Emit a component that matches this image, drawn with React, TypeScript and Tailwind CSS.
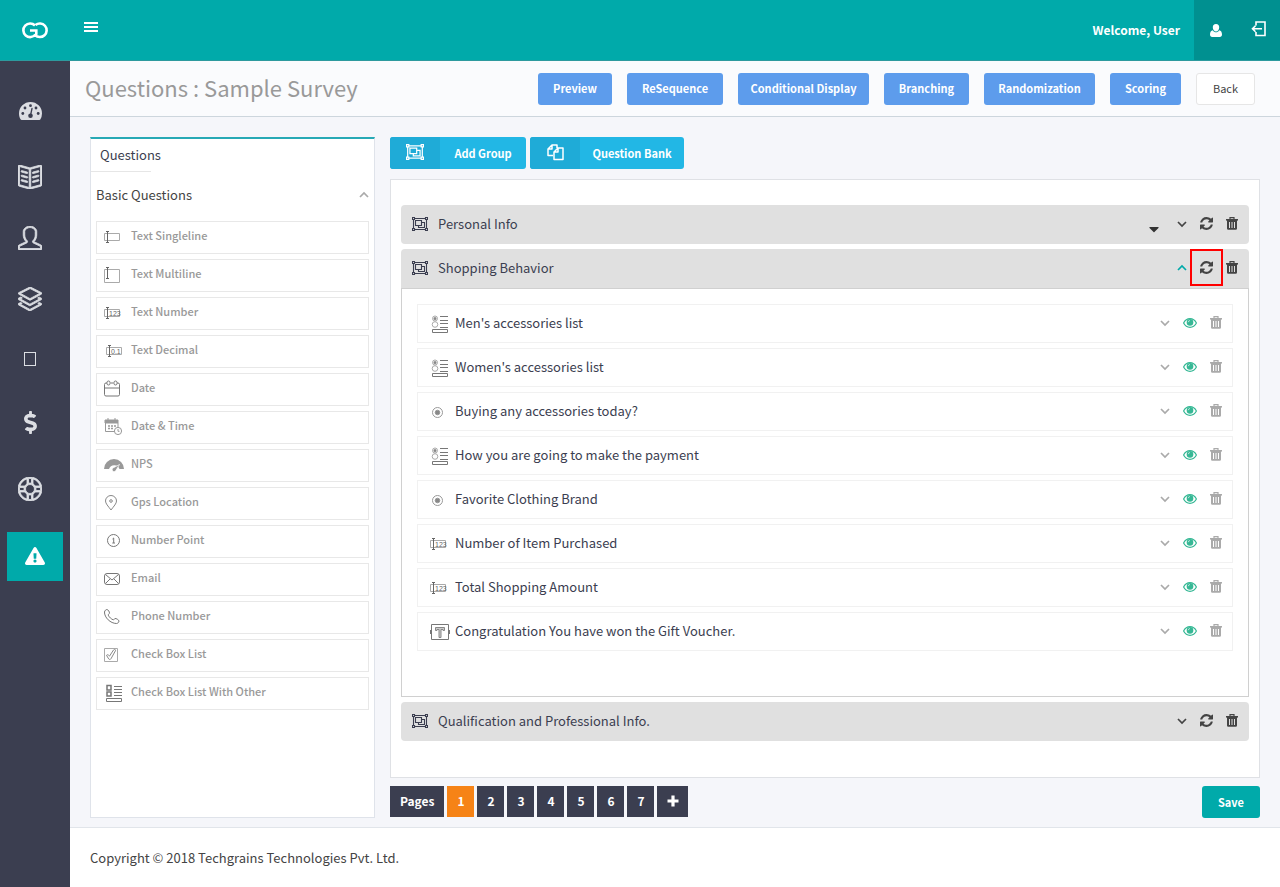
import { ReactNode } from "react";
import clsx from "clsx";
import { FaCaretDown, FaDollarSign, FaExclamationTriangle } from "react-icons/fa";
import { SlBookOpen, SlLayers, SlSupport, SlUser } from "react-icons/sl";

type IconName = "single" | "multi" | "number" | "decimal" | "date" | "datetime" | "nps" | "gps" | "point" | "email" | "phone" | "check" | "checkOther" | "radioOther" | "radio" | "text"

const basicQuestions: { label: string, icon: IconName }[] = [
    { label: "Text Singleline", icon: "single" },
    { label: "Text Multiline", icon: "multi" },
    { label: "Text Number", icon: "number" },
    { label: "Text Decimal", icon: "decimal" },
    { label: "Date", icon: "date" },
    { label: "Date & Time", icon: "datetime" },
    { label: "NPS", icon: "nps" },
    { label: "Gps Location", icon: "gps" },
    { label: "Number Point", icon: "point" },
    { label: "Email", icon: "email" },
    { label: "Phone Number", icon: "phone" },
    { label: "Check Box List", icon: "check" },
    { label: "Check Box List With Other", icon: "checkOther" },
]

const surveyQuestions: { label: string, icon: IconName }[] = [
    { label: "Men's accessories list", icon: "radioOther" },
    { label: "Women's accessories list", icon: "radioOther" },
    { label: "Buying any accessories today?", icon: "radio" },
    { label: "How you are going to make the payment", icon: "radioOther" },
    { label: "Favorite Clothing Brand", icon: "radio" },
    { label: "Number of Item Purchased", icon: "number" },
    { label: "Total Shopping Amount", icon: "number" },
    { label: "Congratulation You have won the Gift Voucher.", icon: "text" },
]

const actions = [
    { label: "Preview", width: "w-[74px]" },
    { label: "ReSequence", width: "w-[96px]" },
    { label: "Conditional Display", width: "w-[131px]" },
    { label: "Branching", width: "w-[85px]" },
    { label: "Randomization", width: "w-[111px]" },
    { label: "Scoring", width: "w-[71px]" },
]

const navItems = [
    { name: "Dashboard", height: "h-[66px]", icon: <GaugeIcon /> },
    { name: "Surveys", height: "h-[66px]", icon: <SlBookOpen size={24} stroke="currentColor" strokeWidth={36} /> },
    { name: "Users", height: "h-[56px]", icon: <SlUser size={24} stroke="currentColor" strokeWidth={36} /> },
    { name: "Groups", height: "h-[66px]", icon: <SlLayers size={24} stroke="currentColor" strokeWidth={36} /> },
    { name: "Devices", height: "h-[54px]", icon: <span className="w-3 h-[14px] border border-[#dcdee3]" /> },
    { name: "Billing", height: "h-[72px]", icon: <FaDollarSign size={23} /> },
    { name: "Support", height: "h-[62px]", icon: <SlSupport size={24} stroke="currentColor" strokeWidth={36} /> },
]

function GaugeIcon() {
    return (
        <svg width="23" height="18" viewBox="0 0 23 18" fill="currentColor">
            <path d="M11.500 0A11.500 11.500 0 0 0 0 11.500c0 2.300.6 4.300 1.700 6 .2.300.5.500.9.500h17.800c.4 0 .7-.2.900-.5a11.500 11.500 0 0 0 1.700-6A11.500 11.500 0 0 0 11.500 0z" />
            <g fill="#3b3e50">
                <circle cx="3.800" cy="11.500" r="1.400" />
                <circle cx="6" cy="6" r="1.400" />
                <circle cx="11.500" cy="3.700" r="1.400" />
                <circle cx="17" cy="6" r="1.400" />
                <circle cx="19.200" cy="11.500" r="1.400" />
                <circle cx="11.500" cy="13.800" r="2.300" />
            </g>
            <path d="M11.500 13.500l1.500-7" stroke="#3b3e50" strokeWidth="1.300" strokeLinecap="round" />
        </svg>
    )
}

function IBeam() {
    return <path d="M2 3.500h3M2 14.500h3M3.500 3.500v11" stroke="#666" />
}

const glyphs: Record<IconName, ReactNode> = {
    single: <><path d="M.5 5.500h15v7H.5z" stroke="#aaa" /><IBeam /></>,
    multi: <><path d="M.5 3.500h15v13H.5z" stroke="#aaa" /><path d="M2 1.500h3M2 12.500h3M3.500 1.500v11" stroke="#666" /></>,
    number: <><path d="M.5 5.500h15v7H.5z" stroke="#aaa" /><IBeam /><text x="5" y="12" fontSize="7" fill="#666" stroke="none" fontFamily="Liberation Sans Narrow, Liberation Sans, sans-serif">123</text></>,
    decimal: <g transform="translate(2 0)"><path d="M.5 5.500h15v7H.5z" stroke="#aaa" /><IBeam /><text x="5" y="12" fontSize="7" fill="#666" stroke="none" fontFamily="Liberation Sans Narrow, Liberation Sans, sans-serif">0.1</text></g>,
    date: <><path d="M3 3H2a1.500 1.500 0 0 0-1.500 1.500v10A1.500 1.500 0 0 0 2 16h12a1.500 1.500 0 0 0 1.500-1.500v-10A1.500 1.500 0 0 0 14 3h-1M6.500 3h3M.5 8h15" /><rect x="3" y="1" width="3" height="4" rx="1.500" /><rect x="10" y="1" width="3" height="4" rx="1.500" /></>,
    datetime: <g stroke="#999"><path d="M1 2h13v3H1zM4 0v2M11 0v2" fill="#999" /><path d="M1.500 5v8.500H10M14 5v4" /><path d="M4 8h2M7 8h2M10 8h2M4 10.500h2M7 10.500h2" strokeWidth="1.500" /><circle cx="14" cy="13" r="3.600" fill="#fff" /><path d="M14 11v2.300h1.500" /></g>,
    nps: <g fill="#999" stroke="none"><path d="M0 13a10 10 0 0 1 20 0h-4.500A5.500 5.500 0 0 0 5 13z" /><path d="M15.500 8.500L12 14.300a2 2 0 1 1-2.500-2.600z" stroke="#fff" strokeWidth=".7" /></g>,
    gps: <g stroke="#888"><path d="M7 16C4 12 1.500 9.500 1.500 7a5.500 5.500 0 0 1 11 0c0 2.500-2.500 5-5.500 9z" /><circle cx="7" cy="7" r="1.300" /></g>,
    point: <><circle cx="9.500" cy="8.500" r="6" /><path d="M8.500 7l1.200-1v5M8.300 11H11" /></>,
    email: <><rect x=".5" y="3.500" width="15" height="11" rx="2.500" /><path d="M1.500 4.500L8 10l6.500-5.500M1.500 13.500L6 9M14.500 13.500L10 9" /></>,
    phone: <path d="M3 1.500c-1 0-2.300 1-2.500 2.500C.3 9.500 6.500 15.500 12.500 15.500c1.300 0 2.300-1.200 2.500-2.500 0-1-3-2.800-4-2.500-.8.300-1 1.500-1.800 1.300C7.500 11.300 5 9 4.300 7.200 4 6.300 5.300 6 5.500 5.200 5.700 4 4 1.500 3 1.500z" />,
    check: <g stroke="#888"><path d="M.5 2.500h13v13H.5z" stroke="#aaa" /><path d="M2.500 9.300c.8-1 1.800-.6 3 .8L9.500 4c.8-1 2.800-.5 1.800 1L7 12.700c-.7 1-1.600 1-2.300.2z" /></g>,
    checkOther: <g transform="translate(2 0)"><path d="M1 1.500h4v4.500H1zM1 8h4v4H1z" strokeWidth="1.500" /><path d="M8 2.500h8M8 5.500h8M8 8.500h8M8 11.500h8M.5 14.500h15v3H.5z" /></g>,
    radioOther: <g transform="translate(2 0)"><circle cx="3" cy="3.500" r="2.500" stroke="#aaa" /><circle cx="3" cy="3.500" r="1.500" fill="#888" stroke="none" /><circle cx="3" cy="9.500" r="2.800" stroke="#aaa" /><path d="M8 1.500h8M8 5.500h8M8 8.500h8M8 12.500h8M.5 14.500h15v3H.5z" /></g>,
    radio: <g stroke="#999"><circle cx="7.500" cy="9.500" r="5" /><circle cx="7.500" cy="9.500" r="2.300" fill="#888" /></g>,
    text: <><path d="M1.500 1.500h17v15h-17z" /><path d="M5.500 4.500h9v3h-1.500v-1h-2v8h-2v-8H7v1H5.500z" stroke="#888" fill="#ccc" /><path d="M0 7h2v4H0zM18 7h2v4h-2z" fill="#777" stroke="none" /></>,
}

function QuestionIcon(props: { name: IconName }) {
    return (
        <svg width="20" height="18" viewBox="0 0 20 18" fill="none" stroke="#777" className="shrink-0">
            {glyphs[props.name]}
        </svg>
    )
}

function GroupIcon(props: { size: number }) {
    return (
        <svg width={props.size} height={props.size} viewBox="0 0 16 16" fill="none" stroke="currentColor" strokeWidth="1.100">
            <path d="M3 2.500h10M3 13.500h10M1.500 4v8M14.500 4v8M.5 1.500h2v2h-2zM13.500 1.500h2v2h-2zM.5 12.500h2v2h-2zM13.500 12.500h2v2h-2zM3.500 4.500h6v5h-6zM9.500 6.500h3v5h-6v-2" />
        </svg>
    )
}

function CopyIcon() {
    return (
        <svg width="17" height="17" viewBox="0 0 17 17" fill="none" stroke="currentColor" strokeWidth="1.500" strokeLinejoin="round">
            <path d="M6 11.500H1V5l4-4h5v3M5 1v4H1M7 8l4-4h5v11.500H7zM11 4v4H7" />
        </svg>
    )
}

function ChevronIcon(props: { up?: boolean }) {
    return (
        <svg width="10" height="12" viewBox="0 0 10 12" fill="none" stroke="currentColor" strokeWidth="1.700">
            <path d={props.up ? "M1 8l4-4 4 4" : "M1 4l4 4 4-4"} />
        </svg>
    )
}

function TrashIcon() {
    return (
        <svg width="12" height="13" viewBox="0 0 12 13" fill="none" stroke="currentColor">
            <path d="M4 2V.7h4V2" strokeWidth="1.200" />
            <path d="M0 2.800h12" strokeWidth="1.600" />
            <path d="M1 3h10v8.500a1.300 1.300 0 0 1-1.300 1.300H2.300A1.300 1.300 0 0 1 1 11.500zM3 5v6h1V5zM5.500 5v6h1V5zM8 5v6h1V5z" fill="currentColor" fillRule="evenodd" stroke="none" />
        </svg>
    )
}

function RefreshIcon() {
    return (
        <svg width="13" height="13" viewBox="0 0 1536 1536" fill="currentColor">
            <path d="M1511 928q0 5-1 7-64 268-268 434.500T764 1536q-146 0-282.500-55T238 1324l-129 129q-19 19-45 19t-45-19-19-45V960q0-26 19-45t45-19h448q26 0 45 19t19 45-19 45l-137 137q71 66 161 102t187 36q134 0 250-65t186-179q11-17 53-117 8-23 30-23h192q13 0 22.500 9.500t9.500 22.500zm25-800v448q0 26-19 45t-45 19h-448q-26 0-45-19t-19-45 19-45l138-138Q969 256 768 256q-134 0-250 65T332 500q-11 17-53 117-8 23-30 23H50q-13 0-22.500-9.500T18 608v-7q65-268 270-434.500T768 0q146 0 284 55.500T1297 212l130-129q19-19 45-19t45 19 19 45z" />
        </svg>
    )
}

function EyeIcon() {
    return (
        <svg width="14" height="10" viewBox="0 0 14 10" fill="none" stroke="currentColor" className="text-[#36b895]">
            <path d="M.6 5C2 2.300 4.300.7 7 .7s5 1.600 6.400 4.300C12 7.700 9.700 9.300 7 9.300S2 7.700.6 5z" strokeWidth="1.200" />
            <circle cx="7" cy="4.400" r="3.300" fill="currentColor" stroke="none" />
            <path d="M5.300 4.200A1.800 1.800 0 0 1 7 2.500" stroke="#fff" strokeWidth=".6" />
        </svg>
    )
}

function MenuIcon() {
    return (
        <svg width="14" height="12" viewBox="0 0 14 12" fill="none" stroke="currentColor" strokeWidth="2">
            <path d="M0 2h14M0 6h14M0 10h14" />
        </svg>
    )
}

function PersonIcon() {
    return (
        <svg width="12" height="13" viewBox="0 0 12 13" fill="currentColor">
            <path d="M6 0a3.400 3.400 0 0 1 3.200 3.500C9.200 5.500 7.800 7.500 6 7.500S2.800 5.500 2.800 3.500A3.400 3.400 0 0 1 6 0zM2.800 6.300C3.600 7.700 4.700 8.300 6 8.300s2.400-.6 3.200-2C11 6.500 12 8.300 12 10.500c0 1.600-.8 2.500-2.200 2.500H2.200C.8 13 0 12.100 0 10.500 0 8.300 1 6.500 2.800 6.300z" />
        </svg>
    )
}

function LogoutIcon() {
    return (
        <svg width="16" height="16" viewBox="0 0 16 16" fill="none" stroke="currentColor" strokeWidth="1.600">
            <path d="M5 4.500V1h9v13.500H5V11M11 7.700H1.500M4.500 4.700l-3 3 3 3" />
        </svg>
    )
}

function PlusIcon() {
    return (
        <svg width="12" height="12" viewBox="0 0 12 12" fill="none" stroke="currentColor" strokeWidth="3.200">
            <path d="M6 .5v11M.5 6h11" />
        </svg>
    )
}

function Logo() {
    return (
        <svg width="28" height="18" viewBox="0 0 28 18" fill="none" stroke="#fff" strokeWidth="2.600">
            <path d="M14 4.500A6.800 6.800 0 1 0 14.500 13.500M14.500 4A6.800 6.800 0 1 1 14 14M9 9.500h6.300v3.200c0 .8-.5 1.300-1.300 1.300" />
        </svg>
    )
}

function GroupHeader(props: { title: string, open?: boolean, caret?: boolean, highlight?: boolean }) {
    return (
        <div className={clsx("flex items-center h-[39px] pb-0.5 px-[11px] bg-[#e0e0e0] text-[#444]", props.open ? "rounded-t" : "rounded")}>
            <span className="text-[#3b3e50]"><GroupIcon size={16} /></span>
            <h3 className="ml-[10px] flex-1 text-[13px] text-[#3b3e50]">{props.title}</h3>
            <div className="flex items-center gap-[13px]">
                {props.caret && <FaCaretDown size={16} className="mt-[10px] mr-0.5 text-[#333]" />}
                <button aria-label={`Toggle ${props.title}`} className={clsx(props.open && "text-[#00aaaa]")}><ChevronIcon up={props.open} /></button>
                <button aria-label={`Refresh ${props.title}`} className="relative">
                    <RefreshIcon />
                    {props.highlight && <span className="absolute -inset-x-[10px] -inset-y-3 border-2 border-[#f00]" />}
                </button>
                <button aria-label={`Delete ${props.title}`}><TrashIcon /></button>
            </div>
        </div>
    )
}

function SurveyQuestion(props: { label: string, icon: IconName }) {
    return (
        <li className="flex items-center h-[39px] pb-0.5 pl-3 pr-[10px] border border-[#f1f1f1] text-[#aaa]">
            <span className="pt-0.5"><QuestionIcon name={props.icon} /></span>
            <span className="ml-[5px] flex-1 text-[13px] text-[#3b3e50]">{props.label}</span>
            <div className="flex items-center gap-[13px]">
                <button aria-label={`Expand ${props.label}`}><ChevronIcon /></button>
                <button aria-label={`Show ${props.label}`}><EyeIcon /></button>
                <button aria-label={`Delete ${props.label}`}><TrashIcon /></button>
            </div>
        </li>
    )
}

function QuestionPalette() {
    return (
        <aside className="w-[285px] shrink-0 bg-white border border-[#dfe3ea] border-t-2 border-t-[#27a9b5]">
            <h2 className="w-[60px] h-[33px] pl-[9px] pt-[6px] text-[13px] leading-5 text-[#3b3e50] border-b border-[#e6e6e6] whitespace-nowrap">Questions</h2>
            <div className="px-[5px]">
                <div className="flex items-center justify-between h-12 pb-0.5 text-[13px]">
                    <h3>Basic Questions</h3>
                    <button aria-label="Collapse Basic Questions" className="text-[#aaa]"><ChevronIcon up /></button>
                </div>
                <ul className="space-y-[5px] mt-px">
                    {basicQuestions.map((question) => {
                        return (
                            <li key={question.label} className="flex items-center h-[33px] px-[7px] pb-0.5 border border-[#e8e8e8] text-[11px] font-medium text-[#999]">
                                <QuestionIcon name={question.icon} />
                                <span className="ml-[7px] pb-[3px]">{question.label}</span>
                            </li>
                        )
                    })}
                </ul>
            </div>
        </aside>
    )
}

function ToolButton(props: { icon: ReactNode, text: string, width: string }) {
    return (
        <button className={clsx("flex h-8 rounded-[3px] overflow-hidden bg-[#22b7e5] text-white text-[11px] font-bold", props.width)}>
            <span className="w-[50px] h-full pb-0.5 flex items-center justify-center bg-[#1fabd7]">{props.icon}</span>
            <span className="flex-1 self-center">{props.text}</span>
        </button>
    )
}

export default function App() {
    return (
        <div className="min-h-screen flex flex-col bg-[#f5f6fa] text-[#444] font-['Noto_Sans_CJK_SC',sans-serif] leading-5">
            <header className="flex h-[61px] bg-[#00aaaa] border-b border-[#2d9a9e] text-white">
                <a href="#" aria-label="Home" className="w-[70px] flex items-center justify-center"><Logo /></a>
                <button aria-label="Toggle menu" className="ml-[14px] mb-[6px]"><MenuIcon /></button>
                <span className="ml-auto mr-[14px] self-center text-[12px] font-bold">Welcome, User</span>
                <div className="flex w-[86px] bg-[#009090]">
                    <a href="#" aria-label="Profile" className="flex-1 flex items-center justify-center"><PersonIcon /></a>
                    <a href="#" aria-label="Log out" className="flex-1 flex items-center justify-center pb-0.5"><LogoutIcon /></a>
                </div>
            </header>

            <div className="flex flex-1">
                <nav className="w-[70px] shrink-0 pt-[17px] bg-[#3b3e50] text-[#dcdee3]">
                    {navItems.map((item) => {
                        return <a key={item.name} href="#" aria-label={item.name} className={clsx("w-[60px] flex items-center justify-center", item.height)}>{item.icon}</a>
                    })}
                    <a href="#" aria-label="Alerts" className="mt-3 mx-[7px] h-[49px] pb-0.5 flex items-center justify-center bg-[#00aaaa] text-white">
                        <FaExclamationTriangle size={20} />
                    </a>
                </nav>

                <div className="flex-1 min-w-0 flex flex-col">
                    <div className="flex items-center justify-between h-14 pl-[15px] pr-[25px] bg-[#fafbfd] border-b border-[#cdd6dd]">
                        <h1 className="pb-1 text-[22px] text-[#999]">Questions : Sample Survey</h1>
                        <div className="flex gap-[15px] text-[11px]">
                            {actions.map((action) => {
                                return <button key={action.label} className={clsx("h-8 pb-0.5 rounded-[3px] bg-[#5d9cec] text-white font-bold whitespace-nowrap", action.width)}>{action.label}</button>
                            })}
                            <button className="w-[59px] h-8 pb-0.5 rounded-[3px] bg-white border border-[#e6e6e6]">Back</button>
                        </div>
                    </div>

                    <div className="flex gap-[15px] px-5 pt-5 pb-[9px]">
                        <QuestionPalette />

                        <main className="flex-1 min-w-0">
                            <div className="flex gap-1">
                                <ToolButton icon={<GroupIcon size={18} />} text="Add Group" width="w-[136px]" />
                                <ToolButton icon={<CopyIcon />} text="Question Bank" width="w-[154px]" />
                            </div>

                            <div className="mt-[10px] px-[10px] pt-[25px] pb-9 bg-white border border-[#dfe1e5]">
                                <GroupHeader title="Personal Info" caret />
                                <div className="my-[5px]">
                                    <GroupHeader title="Shopping Behavior" open highlight />
                                    <ul className="px-[15px] pt-[15px] pb-[45px] space-y-[5px] border border-[#d0d0d0]">
                                        {surveyQuestions.map((question) => {
                                            return <SurveyQuestion key={question.label} label={question.label} icon={question.icon} />
                                        })}
                                    </ul>
                                </div>
                                <GroupHeader title="Qualification and Professional Info." />
                            </div>

                            <div className="flex items-start mt-2 gap-[3px] text-[12px] font-bold text-white">
                                <span className="h-[31px] pb-0.5 px-[10px] flex items-center bg-[#3b3e50]">Pages</span>
                                {[1, 2, 3, 4, 5, 6, 7].map((page) => {
                                    return <button key={page} className={clsx("w-[27px] h-[31px] pb-0.5", page === 1 ? "bg-[#f68316]" : "bg-[#3b3e50]")}>{page}</button>
                                })}
                                <button aria-label="Add page" className="w-[31px] h-[31px] pb-0.5 flex items-center justify-center bg-[#3b3e50]"><PlusIcon /></button>
                                <button className="ml-auto w-[58px] h-8 rounded-[3px] bg-[#00aaaa] text-[11px]">Save</button>
                            </div>
                        </main>
                    </div>

                    <footer className="flex-1 px-5 pt-5 bg-white border-t border-[#e1e5ea] text-[13px]">
                        Copyright © 2018 Techgrains Technologies Pvt. Ltd.
                    </footer>
                </div>
            </div>
        </div>
    )
}
